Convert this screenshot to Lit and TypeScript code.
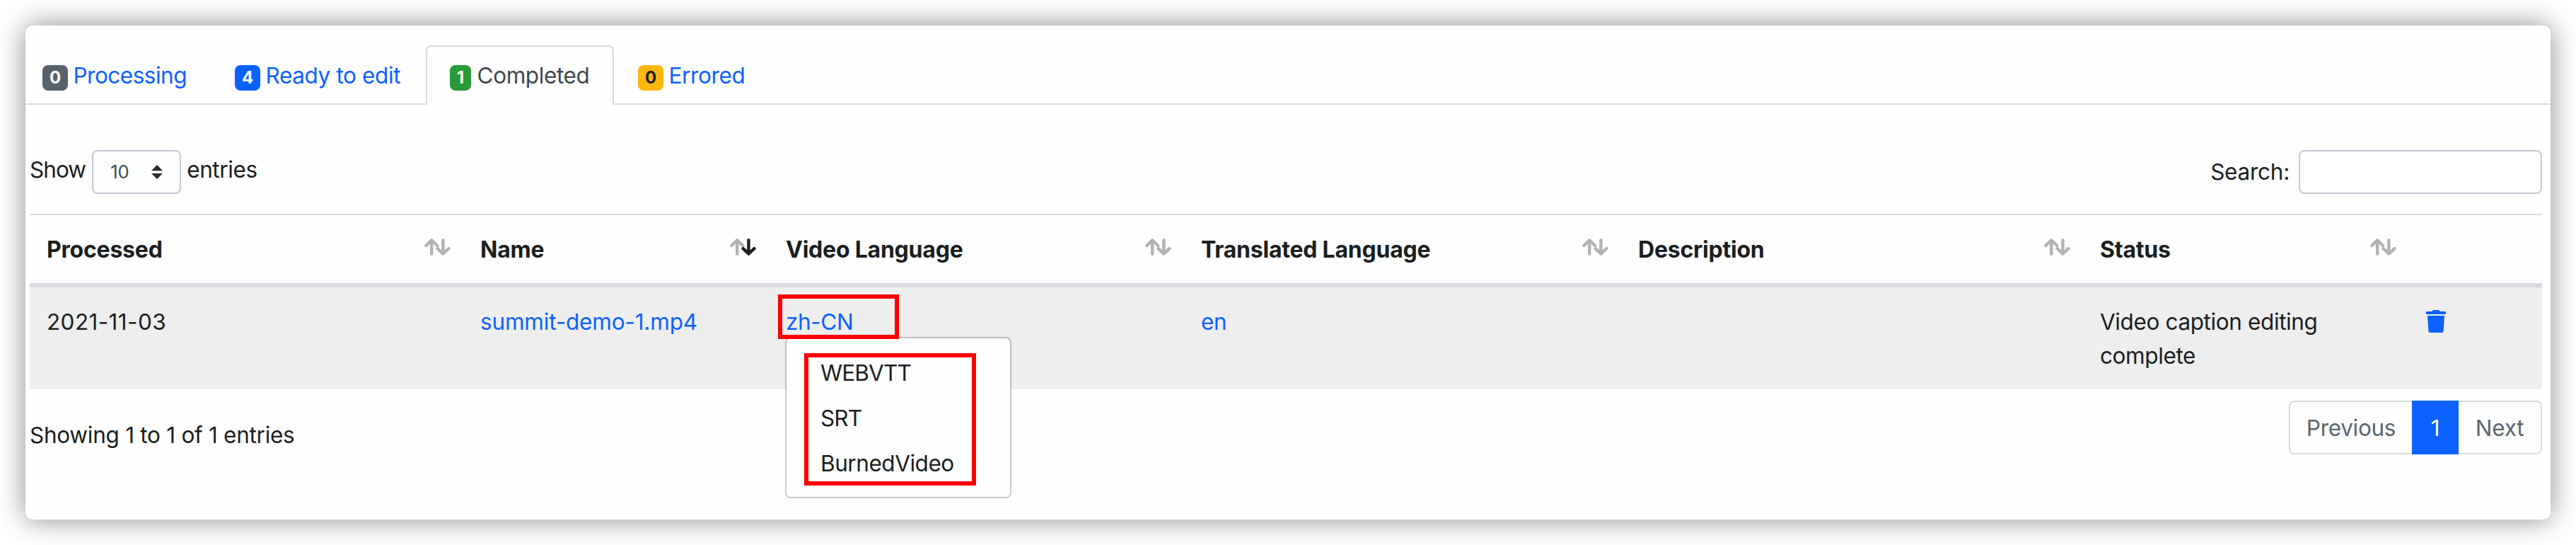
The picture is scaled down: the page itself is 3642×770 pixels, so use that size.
import { LitElement, html, css, svg } from "lit";
import { classMap } from "lit/directives/class-map.js";

interface Tab {
  count: number;
  label: string;
  tone: string;
  active?: boolean;
}

const TABS: Tab[] = [
  { count: 0, label: "Processing", tone: "secondary" },
  { count: 4, label: "Ready to edit", tone: "primary" },
  { count: 1, label: "Completed", tone: "success", active: true },
  { count: 0, label: "Errored", tone: "warning" },
];

const COLUMNS = [
  "Processed",
  "Name",
  "Video Language",
  "Translated Language",
  "Description",
  "Status",
];

const FORMATS = ["WEBVTT", "SRT", "BurnedVideo"];

class SortIcon extends LitElement {
  static properties = { descending: { type: Boolean } };
  declare descending: boolean;

  static styles = css`
    :host {
      display: block;
      width: 37px;
      height: 25px;
    }
    svg {
      display: block;
    }
    path {
      fill: none;
      stroke: #b1b2b4;
      stroke-width: 4.4;
      stroke-linecap: round;
      stroke-linejoin: round;
    }
    .on {
      stroke: #1a1e21;
    }
  `;

  render() {
    return html`<svg width="37" height="25" viewBox="0 0 37 25">
      <path d="M10.2 21.8V2.6M2.4 10L10.2 2.4L18.2 10"></path>
      ${svg`<path class=${this.descending ? "on" : ""} d="M26.4 2.2V21.4M18.6 14.2L26.4 21.6L34.4 14.2"></path>`}
    </svg>`;
  }
}
customElements.define("sort-icon", SortIcon);

class AppRoot extends LitElement {
  static styles = css`
    :host {
      display: block;
      box-sizing: border-box;
      height: 770px;
      padding: 36px;
      background: #fff;
      overflow: hidden;
      font-family: Inter, "Liberation Sans", sans-serif;
      font-size: 31.5px;
      line-height: 48px;
      letter-spacing: -0.38px;
      color: #1a1e21;
    }
    * {
      box-sizing: border-box;
    }
    a {
      color: #0d61ff;
      text-decoration: none;
    }
    .card {
      width: 3570px;
      height: 698px;
      padding-top: 28px;
      border-radius: 10px;
      background: #fefefe;
      box-shadow: 0 0 40px rgba(0, 0, 0, 0.46);
    }
    .tabs {
      display: flex;
      height: 84px;
      border-bottom: 2px solid #d7dbe0;
    }
    .tab {
      display: flex;
      align-items: flex-start;
      gap: 7.5px;
      height: 84px;
      padding: 17px 32px 15px;
      border: 2px solid transparent;
      border-radius: 8px 8px 0 0;
      white-space: nowrap;
    }
    .tab.processing {
      width: 262px;
      padding-left: 22px;
      letter-spacing: -0.5px;
    }
    .tab.ready {
      width: 304px;
    }
    .tab.active {
      gap: 8.5px;
      width: 266px;
      border-color: #d7dbe0 #d7dbe0 #fefefe;
      background: #fefefe;
      color: #3f474f;
    }
    .badge {
      width: 36px;
      height: 36px;
      flex: none;
      margin-top: 9px;
      padding: 6px 0;
      border-radius: 8px;
      font-size: 24px;
      font-weight: 700;
      line-height: 24px;
      letter-spacing: 0;
      text-align: center;
      color: #fff;
    }
    .badge.secondary {
      background: #59626a;
    }
    .badge.primary {
      background: #0d61ff;
    }
    .badge.success {
      width: 30px;
      background: #279b37;
    }
    .badge.warning {
      background: #ffb60e;
      color: #1a1e21;
    }
    .content {
      padding: 64px 12px 0 6px;
    }
    .controls {
      display: flex;
      justify-content: space-between;
      height: 90px;
    }
    .length,
    .filter {
      display: flex;
      height: 62px;
    }
    .length .word {
      padding-top: 4px;
    }
    .show {
      letter-spacing: -0.95px;
    }
    .select {
      display: flex;
      align-items: center;
      justify-content: space-between;
      width: 126px;
      height: 62px;
      margin: 0 8px 0 9px;
      padding: 0 24px;
      border: 2px solid #c3cad5;
      border-radius: 8px;
      font-size: 25.6px;
      letter-spacing: 0;
      color: #444c55;
    }
    .filter .word {
      padding-top: 7px;
      letter-spacing: -0.25px;
    }
    .filter input {
      width: 344px;
      height: 62px;
      margin: 0 0 0 13px;
      border: 2px solid #c3cad5;
      border-radius: 8px;
      background: #fff;
    }
    .row {
      display: grid;
      grid-template-columns: 613px 432px 587px 618px 653px 461px 188px;
    }
    .head {
      height: 104px;
      border-top: 2px solid #d7dbe0;
      border-bottom: 6px solid #d7dbe0;
      font-size: 32px;
      font-weight: 700;
      letter-spacing: -0.22px;
    }
    .th {
      display: flex;
      justify-content: space-between;
      padding: 25px 18px 0 24px;
    }
    .th sort-icon {
      margin-top: 8px;
    }
    .body {
      height: 144px;
      background: #eee;
    }
    .td {
      padding: 25px 24px 23px;
    }
    .date {
      letter-spacing: 0.4px;
    }
    .file {
      letter-spacing: -0.18px;
    }
    .trash {
      display: block;
      margin-top: 7px;
      fill: #0d61ff;
    }
    .picker {
      position: relative;
      width: 160px;
    }
    .menu {
      position: absolute;
      top: 45px;
      left: -1px;
      width: 320px;
      height: 228px;
      padding: 16px 0;
      border: 2px solid rgba(0, 0, 0, 0.2);
      border-radius: 8px;
      background: #fefefe;
      background-clip: padding-box;
    }
    .item {
      padding: 9px 48px 7px;
      letter-spacing: -0.45px;
    }
    .item.caps {
      letter-spacing: -0.85px;
    }
    .mark {
      position: absolute;
      border: 6px solid #f90000;
      pointer-events: none;
    }
    .mark.link {
      top: -15px;
      left: -11px;
      width: 171px;
      height: 63px;
    }
    .mark.formats {
      top: 68px;
      left: 26px;
      width: 243px;
      height: 187px;
    }
    .footer {
      display: flex;
      justify-content: space-between;
      padding-top: 16px;
    }
    .info {
      padding-top: 25px;
      letter-spacing: -0.27px;
    }
    .pages {
      display: flex;
      width: 358px;
      height: 76px;
      border: 2px solid #d7dbe0;
      border-radius: 8px;
      color: #5c656e;
      letter-spacing: -0.3px;
    }
    .page {
      flex: none;
      padding: 13px 0 11px;
      text-align: center;
    }
    .page.previous {
      width: 172px;
    }
    .page.current {
      width: 66px;
      margin: -2px 0;
      padding: 15px 0 13px;
      background: #0d61ff;
      color: #fff;
    }
    .page.next {
      width: 116px;
    }
  `;

  private renderTab(tab: Tab) {
    const classes = {
      tab: true,
      active: !!tab.active,
      processing: tab.tone === "secondary",
      ready: tab.tone === "primary",
    };
    return html`<a class=${classMap(classes)}>
      <span class="badge ${tab.tone}">${tab.count}</span>
      <span>${tab.label}</span>
    </a>`;
  }

  render() {
    return html`
      <main class="card">
        <nav class="tabs">${TABS.map((tab) => this.renderTab(tab))}</nav>
        <section class="content">
          <div class="controls">
            <div class="length">
              <span class="word show">Show</span>
              <span class="select">
                <span>10</span>
                <svg width="16" height="20" viewBox="0 0 16 20">
                  <path fill="#262c31" d="M0 8.3L8 0L16 8.3ZM0 12H16L8 20Z"></path>
                </svg>
              </span>
              <span class="word">entries</span>
            </div>
            <label class="filter">
              <span class="word">Search:</span>
              <input type="search" />
            </label>
          </div>
          <div class="row head">
            ${COLUMNS.map(
              (name) => html`<div class="th">
                <span>${name}</span>
                <sort-icon ?descending=${name === "Name"}></sort-icon>
              </div>`
            )}
          </div>
          <div class="row body">
            <div class="td date">2021-11-03</div>
            <div class="td file"><a>summit-demo-1.mp4</a></div>
            <div class="td">
              <div class="picker">
                <a>zh-CN</a>
                <div class="menu">
                  ${FORMATS.map(
                    (name) => html`<div
                      class=${classMap({ item: true, caps: name === name.toUpperCase() })}
                    >${name}</div>`
                  )}
                </div>
                <div class="mark link"></div>
                <div class="mark formats"></div>
              </div>
            </div>
            <div class="td"><a>en</a></div>
            <div class="td"></div>
            <div class="td">Video caption editing complete</div>
            <div class="td">
              <svg class="trash" width="28" height="32" viewBox="0 0 448 512">
                <path
                  d="M432 32H312l-9.4-18.7A24 24 0 0 0 281.1 0H166.8a23.72 23.72 0 0 0-21.4 13.3L136 32H16A16 16 0 0 0 0 48v32a16 16 0 0 0 16 16h416a16 16 0 0 0 16-16V48a16 16 0 0 0-16-16zM53.2 467a48 48 0 0 0 47.9 45h245.8a48 48 0 0 0 47.9-45L416 128H32z"
                ></path>
              </svg>
            </div>
          </div>
          <div class="footer">
            <div class="info">Showing 1 to 1 of 1 entries</div>
            <div class="pages">
              <span class="page previous">Previous</span>
              <span class="page current">1</span>
              <span class="page next">Next</span>
            </div>
          </div>
        </section>
      </main>
    `;
  }
}
customElements.define("app-root", AppRoot);
